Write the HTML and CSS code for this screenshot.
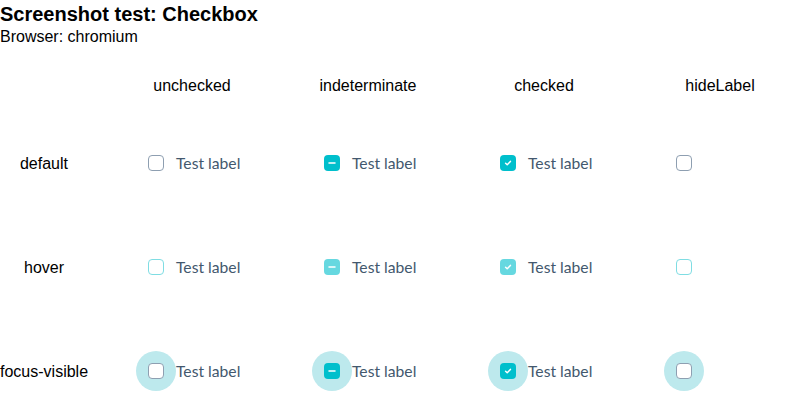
FILE: index.html
```html
<!DOCTYPE html>
<html>
<head>
<meta charset="utf-8">
<link rel="stylesheet" href="styles.css">
</head>
<body>
<h1 class="title">Screenshot test: Checkbox</h1>
<p class="browser">Browser: chromium</p>
<div class="matrix">
  <div class="row head">
    <div></div>
    <div class="colhead">unchecked</div>
    <div class="colhead">indeterminate</div>
    <div class="colhead">checked</div>
    <div class="colhead">hideLabel</div>
  </div>

  <div class="row">
    <div class="rowhead">default</div>
    <div class="cell"><span class="hit"><span class="box"></span></span><span class="label">Test label</span></div>
    <div class="cell"><span class="hit"><span class="box on"><svg viewBox="0 0 16 16" class="mark"><path d="M5 8h6" /></svg></span></span><span class="label">Test label</span></div>
    <div class="cell"><span class="hit"><span class="box on"><svg viewBox="0 0 16 16" class="mark"><path d="M5.6 8.3l1.6 1.5 3.2-3.4" /></svg></span></span><span class="label">Test label</span></div>
    <div class="cell"><span class="hit"><span class="box"></span></span></div>
  </div>

  <div class="row">
    <div class="rowhead">hover</div>
    <div class="cell"><span class="hit"><span class="box hover"></span></span><span class="label">Test label</span></div>
    <div class="cell"><span class="hit"><span class="box on hover"><svg viewBox="0 0 16 16" class="mark"><path d="M5 8h6" /></svg></span></span><span class="label">Test label</span></div>
    <div class="cell"><span class="hit"><span class="box on hover"><svg viewBox="0 0 16 16" class="mark"><path d="M5.6 8.3l1.6 1.5 3.2-3.4" /></svg></span></span><span class="label">Test label</span></div>
    <div class="cell"><span class="hit"><span class="box hover"></span></span></div>
  </div>

  <div class="row">
    <div class="rowhead">focus-visible</div>
    <div class="cell"><span class="hit focus"><span class="box"></span></span><span class="label">Test label</span></div>
    <div class="cell"><span class="hit focus"><span class="box on"><svg viewBox="0 0 16 16" class="mark"><path d="M5 8h6" /></svg></span></span><span class="label">Test label</span></div>
    <div class="cell"><span class="hit focus"><span class="box on"><svg viewBox="0 0 16 16" class="mark"><path d="M5.6 8.3l1.6 1.5 3.2-3.4" /></svg></span></span><span class="label">Test label</span></div>
    <div class="cell"><span class="hit focus"><span class="box"></span></span></div>
  </div>
</div>
</body>
</html>
```

FILE: styles.css
```css
body {
  margin: 0;
  font-family: "Liberation Sans", Arial, sans-serif;
  color: #000;
  background: #fff;
}
.title {
  margin: 0;
  font-size: 20px;
  line-height: 28px;
  font-weight: bold;
}
.browser {
  margin: 0;
  font-size: 16px;
  line-height: 18px;
}
.matrix {
  margin-top: 31px;
}
.row {
  display: grid;
  grid-template-columns: 88px 144px 144px 144px 144px;
  column-gap: 32px;
  height: 40px;
  align-items: center;
  margin-bottom: 64px;
}
.row:last-child {
  margin-bottom: 0;
}
.row.head {
  height: 18px;
  margin-bottom: 48px;
}
.colhead, .rowhead {
  text-align: center;
  font-size: 16px;
  line-height: 18px;
  white-space: nowrap;
}
.rowhead {
  padding-top: 2px;
}
.cell {
  display: flex;
  align-items: center;
  padding-left: 16px;
}
.hit {
  width: 40px;
  height: 40px;
  border-radius: 50%;
  display: flex;
  align-items: center;
  justify-content: center;
  flex: none;
}
.hit.focus {
  background: #bde9ed;
}
.box {
  width: 16px;
  height: 16px;
  box-sizing: border-box;
  border: 1px solid #8e9fb1;
  border-radius: 4px;
  background: #fff;
  display: flex;
}
.box.hover {
  border-color: #7fdde3;
}
.box.on {
  border: none;
  background: #00bfcc;
}
.box.on.hover {
  background: #66d8e0;
}
.mark {
  width: 16px;
  height: 16px;
  fill: none;
  stroke: #fff;
  stroke-width: 1.5;
  stroke-linecap: round;
  stroke-linejoin: round;
}
.label {
  font-family: Lato, "Open Sans", sans-serif;
  font-size: 15.7px;
  color: #43586e;
  line-height: 20px;
}
```
